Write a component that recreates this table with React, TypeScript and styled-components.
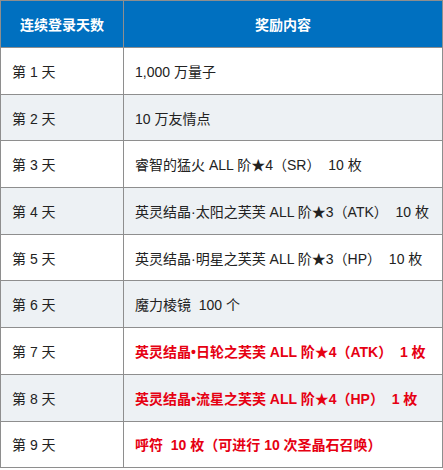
import React from "react";
import styled, { createGlobalStyle } from "styled-components";

const GlobalStyle = createGlobalStyle`
    html, body {
        margin: 0;
        padding: 0;
        background: #fff;
    }
    body {
        font-family: "Liberation Sans", "Noto Sans CJK SC", sans-serif;
    }
`;

const Table = styled.table`
    width: 443px;
    border-collapse: collapse;
    table-layout: fixed;
    border: 1px solid #8e8e8e;
    font-size: 14px;
    color: #222;
`;

const HeadCell = styled.th`
    height: 46px;
    padding: 0;
    background-color: #0070c0;
    color: #fff;
    font-weight: bold;
    text-align: center;
    border: 1px solid #8e8e8e;
`;

const Row = styled.tr<{ striped: boolean }>`
    height: 46.7px;
    background-color: ${props => props.striped ? '#edf1f4' : '#fff'};
`;

const DayCell = styled.td`
    padding: 0 0 0 11px;
    border: 1px solid #8e8e8e;
    white-space: nowrap;
`;

const RewardCell = styled.td<{ hot: boolean }>`
    padding: 0 0 0 11px;
    border: 1px solid #8e8e8e;
    white-space: nowrap;
    color: ${props => props.hot ? '#e60012' : '#222'};
    font-weight: ${props => props.hot ? 'bold' : 'normal'};
`;

const rows = [
    { day: "第 1 天", reward: "1,000 万量子", hot: false },
    { day: "第 2 天", reward: "10 万友情点", hot: false },
    { day: "第 3 天", reward: "睿智的猛火 ALL 阶★4（SR）\u00a0\u00a010 枚", hot: false },
    { day: "第 4 天", reward: "英灵结晶·太阳之芙芙 ALL 阶★3（ATK）\u00a0\u00a010 枚", hot: false },
    { day: "第 5 天", reward: "英灵结晶·明星之芙芙 ALL 阶★3（HP）\u00a0\u00a010 枚", hot: false },
    { day: "第 6 天", reward: "魔力棱镜\u00a0\u00a0100 个", hot: false },
    { day: "第 7 天", reward: "英灵结晶•日轮之芙芙 ALL 阶★4（ATK）\u00a0\u00a01 枚", hot: true },
    { day: "第 8 天", reward: "英灵结晶•流星之芙芙 ALL 阶★4（HP）\u00a0\u00a01 枚", hot: true },
    { day: "第 9 天", reward: "呼符\u00a0\u00a010 枚（可进行 10 次圣晶石召唤）", hot: true },
];

export default function App() {
    return (
        <>
            <GlobalStyle />
            <Table>
                <colgroup>
                    <col style={{ width: 123 }} />
                    <col />
                </colgroup>
                <thead>
                    <tr>
                        <HeadCell>连续登录天数</HeadCell>
                        <HeadCell>奖励内容</HeadCell>
                    </tr>
                </thead>
                <tbody>
                    {rows.map((r, i) => (
                        <Row key={r.day} striped={i % 2 === 1}>
                            <DayCell>{r.day}</DayCell>
                            <RewardCell hot={r.hot}>{r.reward}</RewardCell>
                        </Row>
                    ))}
                </tbody>
            </Table>
        </>
    );
}
